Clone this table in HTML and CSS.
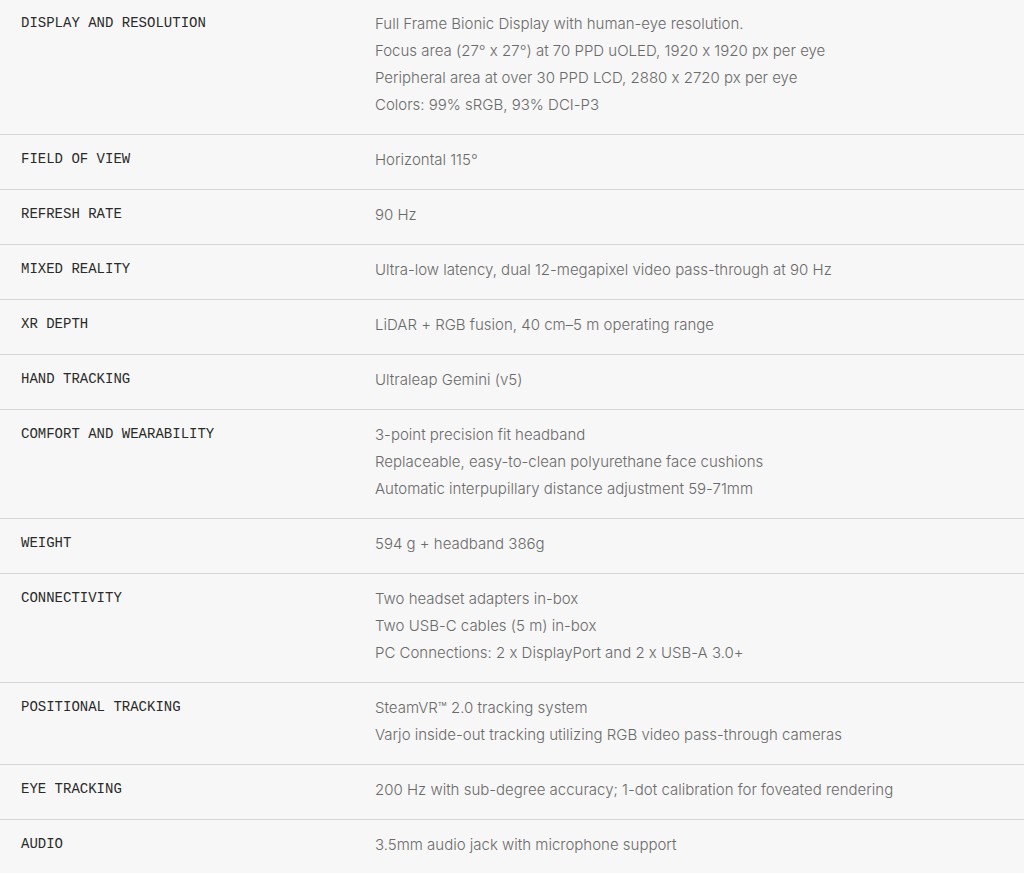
FILE: index.html
```html
<!DOCTYPE html>
<html lang="en">
<head>
<meta charset="utf-8">
<title>Specifications</title>
<link rel="stylesheet" href="styles.css">
</head>
<body>
<div class="specs">
  <div class="row">
    <div class="label">DISPLAY AND RESOLUTION</div>
    <div class="value">
      <p>Full Frame Bionic Display with human-eye resolution.</p>
      <p>Focus area (27° x 27°) at 70 PPD uOLED, 1920 x 1920 px per eye</p>
      <p>Peripheral area at over 30 PPD LCD, 2880 x 2720 px per eye</p>
      <p>Colors: 99% sRGB, 93% DCI-P3</p>
    </div>
  </div>
  <div class="row">
    <div class="label">FIELD OF VIEW</div>
    <div class="value"><p>Horizontal 115°</p></div>
  </div>
  <div class="row">
    <div class="label">REFRESH RATE</div>
    <div class="value"><p>90 Hz</p></div>
  </div>
  <div class="row">
    <div class="label">MIXED REALITY</div>
    <div class="value"><p>Ultra-low latency, dual 12-megapixel video pass-through at 90 Hz</p></div>
  </div>
  <div class="row">
    <div class="label">XR DEPTH</div>
    <div class="value"><p>LiDAR + RGB fusion, 40 cm–5 m operating range</p></div>
  </div>
  <div class="row">
    <div class="label">HAND TRACKING</div>
    <div class="value"><p>Ultraleap Gemini (v5)</p></div>
  </div>
  <div class="row">
    <div class="label">COMFORT AND WEARABILITY</div>
    <div class="value">
      <p>3-point precision fit headband</p>
      <p>Replaceable, easy-to-clean polyurethane face cushions</p>
      <p>Automatic interpupillary distance adjustment 59-71mm</p>
    </div>
  </div>
  <div class="row">
    <div class="label">WEIGHT</div>
    <div class="value"><p>594 g + headband 386g</p></div>
  </div>
  <div class="row">
    <div class="label">CONNECTIVITY</div>
    <div class="value">
      <p>Two headset adapters in-box</p>
      <p>Two USB-C cables (5 m) in-box</p>
      <p>PC Connections: 2 x DisplayPort and 2 x USB-A 3.0+</p>
    </div>
  </div>
  <div class="row">
    <div class="label">POSITIONAL TRACKING</div>
    <div class="value">
      <p>SteamVR™ 2.0 tracking system</p>
      <p>Varjo inside-out tracking utilizing RGB video pass-through cameras</p>
    </div>
  </div>
  <div class="row">
    <div class="label">EYE TRACKING</div>
    <div class="value"><p>200 Hz with sub-degree accuracy; 1-dot calibration for foveated rendering</p></div>
  </div>
  <div class="row">
    <div class="label">AUDIO</div>
    <div class="value"><p>3.5mm audio jack with microphone support</p></div>
  </div>
</div>
</body>
</html>
```
FILE: styles.css
```css
html, body {
  margin: 0;
  padding: 0;
  background: #f7f7f7;
}

.specs {
  display: flex;
  flex-direction: column;
}

.row {
  display: grid;
  grid-template-columns: 354px 1fr;
  padding: 11px 21px 16px 21px;
  border-bottom: 1px solid #d6d6d6;
}

.row:first-child {
  padding-top: 10px;
}

.label {
  font-family: "Liberation Mono", "DejaVu Sans Mono", monospace;
  font-size: 14px;
  line-height: 25px;
  padding-top: 1px;
  color: #2a2a2a;
}

.value {
  font-family: Inter, "Liberation Sans", Arial, sans-serif;
  font-size: 15px;
  font-weight: 300;
  line-height: 27px;
  color: #6a6a6a;
  font-feature-settings: "calt" 0;
}

.value p {
  margin: 0;
}
```
